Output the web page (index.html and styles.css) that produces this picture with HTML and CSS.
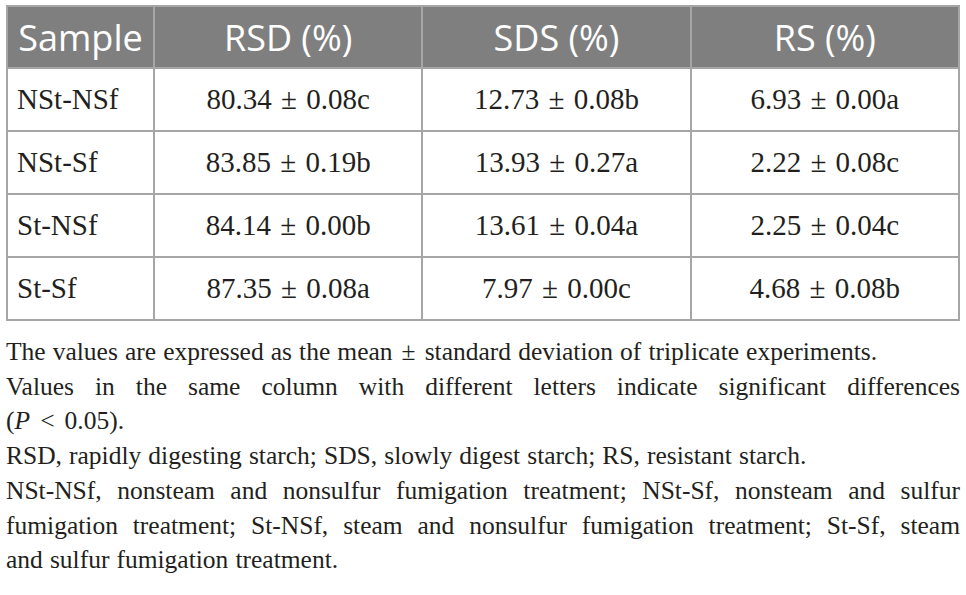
FILE: index.html
```html
<!DOCTYPE html>
<html lang="en">
<head>
  <meta charset="UTF-8">
  <title>Starch fractions</title>
  <link rel="stylesheet" href="styles.css">
</head>
<body>
  <div class="wrap">
    <table class="data_table">
      <thead>
        <tr>
          <th class="col_sample">Sample</th>
          <th>RSD (%)</th>
          <th>SDS (%)</th>
          <th>RS (%)</th>
        </tr>
      </thead>
      <tbody>
        <tr>
          <td class="name">NSt-NSf</td>
          <td>80.34 <span class="pm">±</span> 0.08c</td>
          <td>12.73 <span class="pm">±</span> 0.08b</td>
          <td>6.93 <span class="pm">±</span> 0.00a</td>
        </tr>
        <tr>
          <td class="name">NSt-Sf</td>
          <td>83.85 <span class="pm">±</span> 0.19b</td>
          <td>13.93 <span class="pm">±</span> 0.27a</td>
          <td>2.22 <span class="pm">±</span> 0.08c</td>
        </tr>
        <tr>
          <td class="name">St-NSf</td>
          <td>84.14 <span class="pm">±</span> 0.00b</td>
          <td>13.61 <span class="pm">±</span> 0.04a</td>
          <td>2.25 <span class="pm">±</span> 0.04c</td>
        </tr>
        <tr>
          <td class="name">St-Sf</td>
          <td>87.35 <span class="pm">±</span> 0.08a</td>
          <td>7.97 <span class="pm">±</span> 0.00c</td>
          <td>4.68 <span class="pm">±</span> 0.08b</td>
        </tr>
      </tbody>
    </table>

    <!-- Footnotes -->
    <div class="notes">
      <p>The values are expressed as the mean <span class="pm">±</span> standard deviation of triplicate experiments.</p>
      <p><span class="full_line">Values in the same column with different letters indicate significant differences</span>(<i>P</i> <span class="lt">&lt;</span> 0.05).</p>
      <p>RSD, rapidly digesting starch; SDS, slowly digest starch; RS, resistant starch.</p>
      <p><span class="full_line">NSt-NSf, nonsteam and nonsulfur fumigation treatment; NSt-Sf, nonsteam and sulfur</span><span class="full_line">fumigation treatment; St-NSf, steam and nonsulfur fumigation treatment; St-Sf, steam</span>and sulfur fumigation treatment.</p>
    </div>
  </div>
</body>
</html>
```

FILE: styles.css
```css
body {
  margin: 0;
  padding: 0;
  background-color: #ffffff;
  font-family: 'Liberation Serif', serif;
  color: #231f20;
}

.wrap {
  padding: 5px 6px 0 6px;
}

/* Table */
.data_table {
  width: 954px;
  border-collapse: collapse;
  table-layout: fixed;
  font-family: 'Liberation Serif', serif;
}
.data_table th,
.data_table td {
  border: 2px solid #a6a6a6;
  text-align: center;
  padding: 0;
}
.data_table th {
  height: 60px;
  background-color: #7f7f7f;
  color: #ffffff;
  font-family: 'Open Sans', sans-serif;
  font-weight: 400;
  font-size: 36px;
}
.data_table th.col_sample {
  width: 145px;
}
.data_table td {
  height: 61px;
  font-size: 29px;
}
.data_table td.name {
  text-align: left;
  padding-left: 9px;
}
.pm {
  padding: 0 2px;
}

/* Footnotes */
.notes {
  margin-top: 14px;
  font-size: 25.5px;
  line-height: 34.7px;
  word-spacing: 0.7px;
}
.notes p {
  margin: 0;
  text-align: justify;
}
.full_line {
  display: block;
  text-align-last: justify;
}
.lt {
  padding: 0 3px;
}
```
